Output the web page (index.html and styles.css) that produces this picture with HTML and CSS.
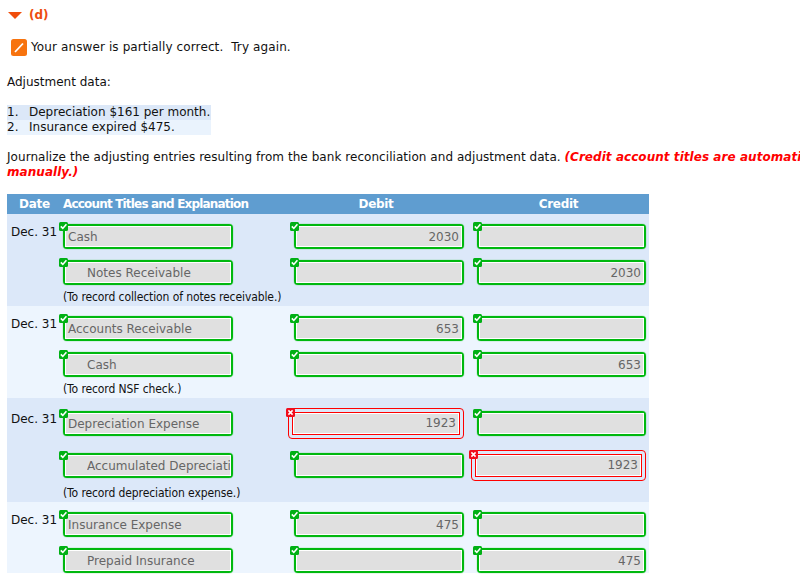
FILE: index.html
```html
<!DOCTYPE html>
<html lang="en">
<head>
<meta charset="utf-8">
<title>Journal entries</title>
<link rel="stylesheet" href="styles.css">
</head>
<body>
<svg width="0" height="0" class="defs"><defs>
<symbol id="ok" viewBox="0 0 9 9"><rect width="9" height="9" rx="1.5" fill="#00b015"/><path d="M1.8 4.4 3.8 6.4 7.4 2.2" fill="none" stroke="#fff" stroke-width="1.6"/></symbol>
<symbol id="no" viewBox="0 0 9 9"><rect width="9" height="9" rx="1.5" fill="#f00d1c"/><path d="M2.4 2.4 6.6 6.6M6.6 2.4 2.4 6.6" fill="none" stroke="#fff" stroke-width="1.5"/></symbol>
</defs></svg>
<div class="part"><svg class="tri" width="14" height="7" viewBox="0 0 14 7"><path d="M0 0H14L7 7Z" fill="#f04e0c"/></svg><b>(d)</b></div>
<div class="status"><svg width="16" height="17" viewBox="0 0 16 17"><rect width="16" height="17" rx="2.5" fill="#f7730e"/><path d="M4 13 12 4.500" stroke="#fff" stroke-width="1.8"/></svg><span>Your answer is partially correct.&nbsp; Try again.</span></div>
<p class="label">Adjustment data:</p>
<ol class="data">
<li class="odd"><span class="n">1.</span>Depreciation $161 per month.</li>
<li><span class="n">2.</span>Insurance expired $475.</li>
</ol>
<p class="instr">Journalize the adjusting entries resulting from the bank reconciliation and adjustment data. <em>(Credit account titles are automatically indented when amount is entered. Do not indent<br>manually.)</em></p>
<div class="journal">
<div class="line head"><div class="h-date">Date</div><div class="h-acct">Account Titles and Explanation</div><div class="h-num">Debit</div><div class="h-num">Credit</div></div>

<div class="entry odd">
<div class="line"><div class="date">Dec. 31</div>
<div class="f"><svg class="b"><use href="#ok"/></svg><div class="in">Cash</div></div>
<div class="f"><svg class="b"><use href="#ok"/></svg><div class="in num">2030</div></div>
<div class="f"><svg class="b"><use href="#ok"/></svg><div class="in num"></div></div></div>
<div class="line"><div class="date"></div>
<div class="f"><svg class="b"><use href="#ok"/></svg><div class="in ind">Notes Receivable</div></div>
<div class="f"><svg class="b"><use href="#ok"/></svg><div class="in num"></div></div>
<div class="f"><svg class="b"><use href="#ok"/></svg><div class="in num">2030</div></div></div>
<div class="note">(To record collection of notes receivable.)</div>
</div>

<div class="entry">
<div class="line"><div class="date">Dec. 31</div>
<div class="f"><svg class="b"><use href="#ok"/></svg><div class="in">Accounts Receivable</div></div>
<div class="f"><svg class="b"><use href="#ok"/></svg><div class="in num">653</div></div>
<div class="f"><svg class="b"><use href="#ok"/></svg><div class="in num"></div></div></div>
<div class="line"><div class="date"></div>
<div class="f"><svg class="b"><use href="#ok"/></svg><div class="in ind">Cash</div></div>
<div class="f"><svg class="b"><use href="#ok"/></svg><div class="in num"></div></div>
<div class="f"><svg class="b"><use href="#ok"/></svg><div class="in num">653</div></div></div>
<div class="note">(To record NSF check.)</div>
</div>

<div class="entry odd">
<div class="line"><div class="date">Dec. 31</div>
<div class="f"><svg class="b"><use href="#ok"/></svg><div class="in">Depreciation Expense</div></div>
<div class="f bad"><svg class="b"><use href="#no"/></svg><div class="in num">1923</div></div>
<div class="f"><svg class="b"><use href="#ok"/></svg><div class="in num"></div></div></div>
<div class="line"><div class="date"></div>
<div class="f"><svg class="b"><use href="#ok"/></svg><div class="in ind"><span class="clip">Accumulated Depreciation</span></div></div>
<div class="f"><svg class="b"><use href="#ok"/></svg><div class="in num"></div></div>
<div class="f bad"><svg class="b"><use href="#no"/></svg><div class="in num">1923</div></div></div>
<div class="note">(To record depreciation expense.)</div>
</div>

<div class="entry">
<div class="line"><div class="date">Dec. 31</div>
<div class="f"><svg class="b"><use href="#ok"/></svg><div class="in">Insurance Expense</div></div>
<div class="f"><svg class="b"><use href="#ok"/></svg><div class="in num">475</div></div>
<div class="f"><svg class="b"><use href="#ok"/></svg><div class="in num"></div></div></div>
<div class="line"><div class="date"></div>
<div class="f"><svg class="b"><use href="#ok"/></svg><div class="in ind">Prepaid Insurance</div></div>
<div class="f"><svg class="b"><use href="#ok"/></svg><div class="in num"></div></div>
<div class="f"><svg class="b"><use href="#ok"/></svg><div class="in num">475</div></div></div>
</div>
</div>
</body>
</html>
```
FILE: styles.css
```css
html { overflow: hidden; background: #fff; }
body {
  margin: 0;
  padding: 0 0 0 7px;
  width: 793px;
  height: 579px;
  overflow: hidden;
  font-family: "DejaVu Sans", Verdana, sans-serif;
  font-size: 12px;
  line-height: 15px;
  color: #111;
}
.defs { position: absolute; }
.part { display: flex; align-items: center; gap: 7px; height: 15px; margin: 8px 0 0 1px; color: #ee4c0f; }
.part b { font-size: 12px; }
.status { display: flex; align-items: center; gap: 4px; margin: 16px 0 0 4px; height: 17px; letter-spacing: 0.11px; }
.label { margin: 19px 0 0; }
.data { list-style: none; margin: 15px 0 0; padding: 0; width: 204px; }
.data li { display: flex; background: #eaf3fd; height: 15px; }
.data li.odd { background: #dce8f8; }
.n { width: 22px; }
.instr { margin: 15px 0 0; white-space: nowrap; letter-spacing: 0.05px; }
.instr em { color: #f00; font-weight: bold; font-style: italic; }
.journal { margin-top: 14px; width: 642px; }
.line { display: grid; grid-template-columns: 56px 170px 61px 170px 13px 169px; align-items: center; margin-bottom: 11px; }
.line > :nth-child(3) { grid-column: 4; }
.line > :nth-child(4) { grid-column: 6; }
.head { box-sizing: border-box; height: 20px; margin: 0; padding-top: 1px; background: #5f9dd0; color: #fff; font-weight: bold; font-size: 12px; }
.h-date { padding-left: 12px; letter-spacing: -0.3px; }
.h-acct { white-space: nowrap; letter-spacing: -0.82px; }
.head .h-num { text-align: center; padding-right: 6px; letter-spacing: -0.3px; }
.entry { padding-top: 10px; background: #edf5fe; }
.entry.odd { background: #dce8f9; }
.date { padding-left: 4px; margin-bottom: 9px; height: 14px; line-height: 14px; white-space: nowrap; }
.note { height: 16px; margin-top: -11px; padding: 5px 0 0 56px; font-family: "DejaVu Sans Condensed", "DejaVu Sans", sans-serif; line-height: 14px; letter-spacing: -0.1px; }
.f { position: relative; height: 25px; box-sizing: border-box; border: 2px solid #00b80f; border-radius: 4px; box-shadow: 0 0 1px #00b80f; }
.in { box-sizing: border-box; height: 21px; border: 1px solid #fff; background: #e0e0e0; color: #666; padding: 0 2px; line-height: 20px; white-space: nowrap; overflow: hidden; }
.num { text-align: right; }
.ind { padding: 0 0 0 21px; }
.clip { display: block; overflow: hidden; }
.b { position: absolute; left: -6px; top: -4px; width: 9px; height: 9px; }
.f.bad { height: 31px; margin-left: -6px; border: 1px solid #f00; box-shadow: none; padding: 3px; }
.bad .in { border: 1px solid #f00; height: 23px; box-shadow: inset 0 0 0 1px #fff; padding-right: 3px; line-height: 21px; }
.bad .b { left: -3px; top: -1px; }
```
